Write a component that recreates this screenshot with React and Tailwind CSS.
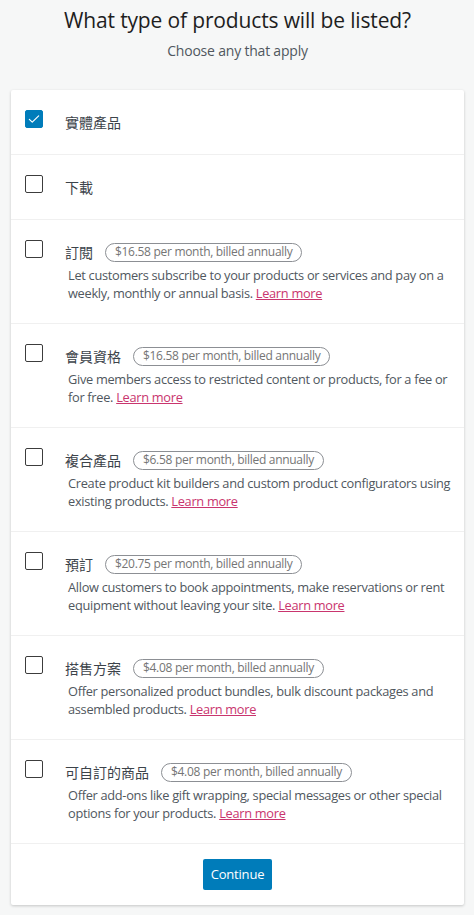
import React, { useState } from 'react';

const products = [
  { key: 'physical', label: '實體產品' },
  { key: 'downloads', label: '下載' },
  {
    key: 'subscriptions',
    label: '訂閱',
    price: '$16.58 per month, billed annually',
    desc: 'Let customers subscribe to your products or services and pay on a weekly, monthly or annual basis.',
  },
  {
    key: 'memberships',
    label: '會員資格',
    price: '$16.58 per month, billed annually',
    desc: 'Give members access to restricted content or products, for a fee or for free.',
  },
  {
    key: 'composite',
    label: '複合產品',
    price: '$6.58 per month, billed annually',
    desc: 'Create product kit builders and custom product configurators using existing products.',
  },
  {
    key: 'bookings',
    label: '預訂',
    price: '$20.75 per month, billed annually',
    desc: 'Allow customers to book appointments, make reservations or rent equipment without leaving your site.',
  },
  {
    key: 'bundles',
    label: '搭售方案',
    price: '$4.08 per month, billed annually',
    desc: 'Offer personalized product bundles, bulk discount packages and assembled products.',
  },
  {
    key: 'product-add-ons',
    label: '可自訂的商品',
    price: '$4.08 per month, billed annually',
    desc: 'Offer add-ons like gift wrapping, special messages or other special options for your products.',
  },
];

function Checkbox({ checked, onChange }) {
  return (
    <button
      type="button"
      onClick={onChange}
      className={
        'w-[18px] h-[18px] shrink-0 rounded-[2px] flex items-center justify-center ' +
        (checked ? 'bg-[#007cba] border border-[#007cba]' : 'bg-white border-[1.5px] border-[#3c3c3c]')
      }
    >
      {checked && (
        <svg width="14" height="14" viewBox="0 0 24 24" fill="none">
          <path d="M4 12.5l5 5L20 6.5" stroke="white" strokeWidth="2" strokeLinecap="round" strokeLinejoin="round" />
        </svg>
      )}
    </button>
  );
}

export default function App() {
  const [selected, setSelected] = useState(['physical']);

  const toggle = (key) => {
    setSelected((prev) => (prev.includes(key) ? prev.filter((k) => k !== key) : [...prev, key]));
  };

  return (
    <div
      className="min-h-[915px] bg-[#f6f7f7] pl-[11px] pr-[10px] pt-[6px]"
      style={{ fontFamily: '"Open Sans", "Noto Sans CJK TC", sans-serif' }}
    >
      <h2 className="text-center text-[21px] leading-[28px] tracking-[-0.15px] text-[#1e1e1e]">What type of products will be listed?</h2>
      <p className="text-center text-[14px] leading-[20px] mt-[7px] tracking-[-0.2px] text-[#50575e]">Choose any that apply</p>

      <div className="mt-[29px] bg-white rounded-[2px] shadow-[0_1px_3px_rgba(0,0,0,0.2)]">
        {products.map((p) => (
          <div key={p.key} className="flex items-start pl-[14px] pr-[10px] pt-5 pb-5 [&:not(:first-child)]:border-t border-[#f0f0f0] data-[desc=true]:pb-[21px]" data-desc={!!p.desc}>
            <Checkbox checked={selected.includes(p.key)} onChange={() => toggle(p.key)} />
            <div className="ml-[22px] flex-1">
              <div className="flex items-center h-6">
                <span className="text-[14px] text-[#3c434a]">{p.label}</span>
                {p.price && (
                  <span className="ml-[12px] h-[19px] flex items-center px-[9px] border border-[#8c8f94] rounded-full text-[12px] tracking-[-0.3px] text-[#757575]">
                    {p.price}
                  </span>
                )}
              </div>
              {p.desc && (
                <p className="mt-[2px] pl-[3px] text-[12.8px] leading-[18px] tracking-[-0.3px] text-[#50575e]">
                  {p.desc}{' '}
                  <a href="#" className="text-[#c9356e] underline">Learn more</a>
                </p>
              )}
            </div>
          </div>
        ))}
        <div className="border-t border-[#f0f0f0] flex justify-center pt-[15px] pb-[15px]">
          <button className="h-[31px] px-[8px] bg-[#007cba] rounded-[2px] text-white text-[13px] tracking-[-0.2px]">Continue</button>
        </div>
      </div>
    </div>
  );
}
